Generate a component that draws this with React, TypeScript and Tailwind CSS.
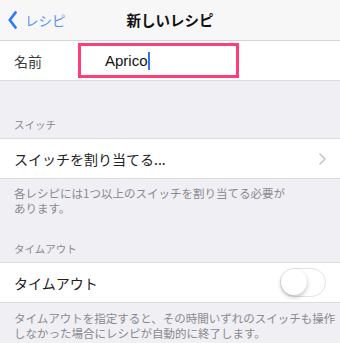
import React from "react";

const font = { fontFamily: '"Noto Sans CJK JP", "Liberation Sans", sans-serif' };

function SectionHeader({ children, className = "" }: { children: React.ReactNode; className?: string }) {
  return (
    <div className={`px-[14px] pb-[7px] text-[10.5px] text-[#8a8a8e] ${className}`}>
      <div className="h-[13px] leading-[13px] whitespace-nowrap">{children}</div>
    </div>
  );
}

function Footer({ lines, className = "" }: { lines: string[]; className?: string }) {
  return (
    <div className={`px-[14px] text-[11.5px] text-[#8a8a8e] ${className}`}>
      {lines.map((l) => (
        <div key={l} className="h-[15px] leading-[15px] whitespace-nowrap">
          {l}
        </div>
      ))}
    </div>
  );
}

export default function App() {
  return (
    <div className="w-[340px] h-[343px] overflow-hidden bg-[#efeff4]" style={font}>
      {/* nav bar */}
      <div className="grid grid-cols-[1fr_auto_1fr] items-center h-[41px] bg-[#f7f7f7] border-b border-[#d4d4d8]">
        <div className="flex items-center pl-[8px] gap-[8px]">
          <svg width="9" height="18" viewBox="0 0 9 18" fill="none">
            <path d="M7.5 1.5 L1.8 9 L7.5 16.5" stroke="#2f7bf5" strokeWidth="2.8" strokeLinecap="round" strokeLinejoin="round" />
          </svg>
          <span className="text-[13.5px] leading-[18px] text-[#5c95f3]">レシピ</span>
        </div>
        <div className="text-[14.5px] leading-[18px] font-bold text-[#111]">新しいレシピ</div>
        <div />
      </div>

      {/* name row */}
      <div className="flex items-center h-[40px] bg-white border-b border-[#dcdce0] pl-[14px]">
        <span className="w-[64px] text-[14px] leading-[18px] text-[#3a3a3c]">名前</span>
        <div className="flex items-center w-[161px] h-[35px] border-[3px] border-[#ff3d78] pl-[24px]">
          <span className="text-[15px] leading-[18px] text-[#111]" style={{ fontFamily: '"Liberation Sans", sans-serif' }}>
            Aprico
          </span>
          <span className="w-[2px] h-[18px] bg-[#3a6ff0]" />
        </div>
      </div>

      <SectionHeader className="pt-[37px]">スイッチ</SectionHeader>
      <div className="flex items-center justify-between h-[41px] bg-white border-y border-[#dcdce0] px-[14px]">
        <span className="text-[14px] leading-[18px] text-[#222]">スイッチを割り当てる...</span>
        <svg width="7" height="12" viewBox="0 0 7 12" fill="none">
          <path d="M1 1 L6 6 L1 11" stroke="#c4c4c8" strokeWidth="1.5" strokeLinecap="round" strokeLinejoin="round" />
        </svg>
      </div>
      <Footer className="pt-[7px]" lines={["各レシピには1つ以上のスイッチを割り当てる必要が", "あります。"]} />

      <SectionHeader className="pt-[26px]">タイムアウト</SectionHeader>
      <div className="flex items-center justify-between h-[41px] bg-white border-y border-[#dcdce0] pl-[14px] pr-[14px]">
        <span className="text-[14px] leading-[18px] text-[#222]">タイムアウト</span>
        <div className="relative w-[46px] h-[29px] rounded-full border-[1.5px] border-[#e2e2e6] bg-white">
          <div className="absolute left-[0px] top-[0px] w-[26px] h-[26px] rounded-full bg-white shadow-[0_2px_4px_rgba(0,0,0,0.25)]" />
        </div>
      </div>
      <Footer
        className="pt-[8px]"
        lines={["タイムアウトを指定すると、その時間いずれのスイッチも操作", "しなかった場合にレシピが自動的に終了します。"]}
      />
    </div>
  );
}
